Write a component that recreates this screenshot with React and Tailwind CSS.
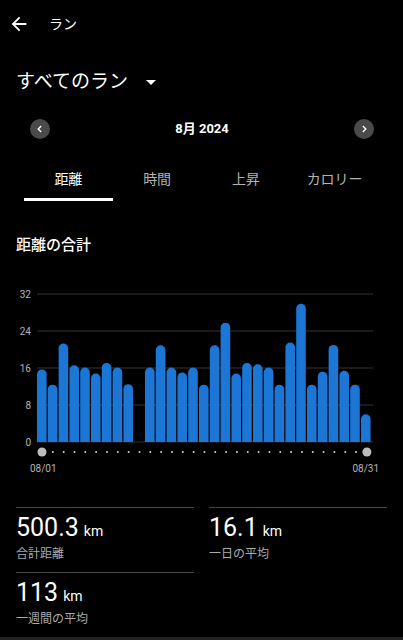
import React from 'react'

const font = { fontFamily: 'Roboto, "Noto Sans CJK JP", sans-serif' }

// daily distance in km, 0 = no run
const days = [
  15.7, 12.4, 21.3, 16.6, 16.1, 14.8, 17.1, 16.1, 12.5, 0,
  16.1, 20.9, 16.1, 15.0, 16.1, 12.4, 20.9, 25.8, 14.8, 17.1,
  16.8, 16.1, 12.4, 21.5, 29.9, 12.4, 15.2, 21.0, 15.4, 12.4, 6.0,
]

const tabs = ['距離', '時間', '上昇', 'カロリー']

function Chart() {
  const base = 157
  const unit = 4.625
  const pitch = 10.8
  const w = 9.6
  const r = w / 2
  return (
    <svg width="403" height="195" viewBox="0 0 403 195" className="block">
      {[0, 8, 16, 24, 32].map((v) => {
        const y = base - v * unit
        return (
          <g key={v}>
            <line x1="37" x2="373" y1={y} y2={y} stroke={v === 0 ? '#2c2c2c' : '#353535'} strokeWidth="1" />
            <text x="31" y={y + 3.5} textAnchor="end" fontSize="10" fill="#b5b5b5" style={font}>{v}</text>
          </g>
        )
      })}
      {days.map((d, i) => {
        if (!d) return null
        const x = 37 + i * pitch
        const top = base - d * unit
        return (
          <path
            key={i}
            d={`M${x} ${base} V${top + r} A${r} ${r} 0 0 1 ${x + w} ${top + r} V${base} Z`}
            fill="#1b76d6"
          />
        )
      })}
      {days.map((_, i) =>
        i === 0 || i === 30 ? (
          <circle key={i} cx={42 + i * 10.83} cy="167" r="4.5" fill="#bdbdbd" />
        ) : (
          <circle key={i} cx={42 + i * 10.83} cy="167" r="1" fill="#d0d0d0" />
        )
      )}
      <text x="30" y="187" fontSize="10" fill="#b5b5b5" style={font}>08/01</text>
      <text x="379" y="187" fontSize="10" textAnchor="end" fill="#b5b5b5" style={font}>08/31</text>
    </svg>
  )
}

function Stat({ value, label }) {
  return (
    <div className="h-[65px] border-t border-[#444] pt-[5px]">
      <div className="flex items-baseline text-white leading-[30px]">
        <span className="text-[25px]">{value}</span>
        <span className="ml-[5px] text-[14px]">km</span>
      </div>
      <div className="text-[12px] leading-[16px] text-[#ababab]">{label}</div>
    </div>
  )
}

export default function App() {
  return (
    <div className="h-[640px] bg-black text-white flex flex-col overflow-hidden" style={font}>
      <header className="h-12 flex items-center pl-[8px]">
        <svg width="22" height="22" viewBox="0 0 24 24" fill="#fff">
          <path d="M20 11H7.83l5.59-5.59L12 4l-8 8 8 8 1.41-1.41L7.83 13H20v-2z" />
        </svg>
        <span className="ml-[19px] text-[14px]">ラン</span>
      </header>

      <div className="mt-[21px] flex items-center pl-4 h-[26px]">
        <span className="text-[19px] leading-[26px]">すべてのラン</span>
        <svg width="10" height="5" viewBox="0 0 10 5" className="ml-[18px]">
          <path d="M0 0h10L5 5z" fill="#fff" />
        </svg>
      </div>

      <div className="mt-[24px] flex items-center justify-between pl-[30px] pr-[29px] h-5">
        <button className="w-5 h-5 rounded-full bg-[#4a4a4a] flex items-center justify-center">
          <svg width="10" height="10" viewBox="0 0 10 10">
            <path d="M6.2 2 3.2 5l3 3" stroke="#fff" strokeWidth="1.4" fill="none" />
          </svg>
        </button>
        <span className="text-[13px] font-bold">8月 2024</span>
        <button className="w-5 h-5 rounded-full bg-[#4a4a4a] flex items-center justify-center">
          <svg width="10" height="10" viewBox="0 0 10 10">
            <path d="M3.8 2l3 3-3 3" stroke="#fff" strokeWidth="1.4" fill="none" />
          </svg>
        </button>
      </div>

      <div className="mt-[21px] px-6 grid grid-cols-4">
        {tabs.map((t, i) => (
          <div key={t} className="flex flex-col items-center">
            <div className={`h-[38px] flex items-center text-[14px] ${i === 0 ? 'text-white' : 'text-[#b3b3b3]'}`}>{t}</div>
            <div className={`h-[3px] w-full ${i === 0 ? 'bg-white' : ''}`} />
          </div>
        ))}
      </div>

      <div className="mt-[33px] pl-4 text-[15px] leading-[22px] font-medium">距離の合計</div>

      <div className="mt-[29px]">
        <Chart />
      </div>

      <div className="mt-[27px] px-4 grid grid-cols-2 gap-x-[15px]">
        <Stat value="500.3" label="合計距離" />
        <Stat value="16.1" label="一日の平均" />
        <Stat value="113" label="一週間の平均" />
      </div>

      <div className="mt-auto h-[3px] bg-[#222]" />
    </div>
  )
}
